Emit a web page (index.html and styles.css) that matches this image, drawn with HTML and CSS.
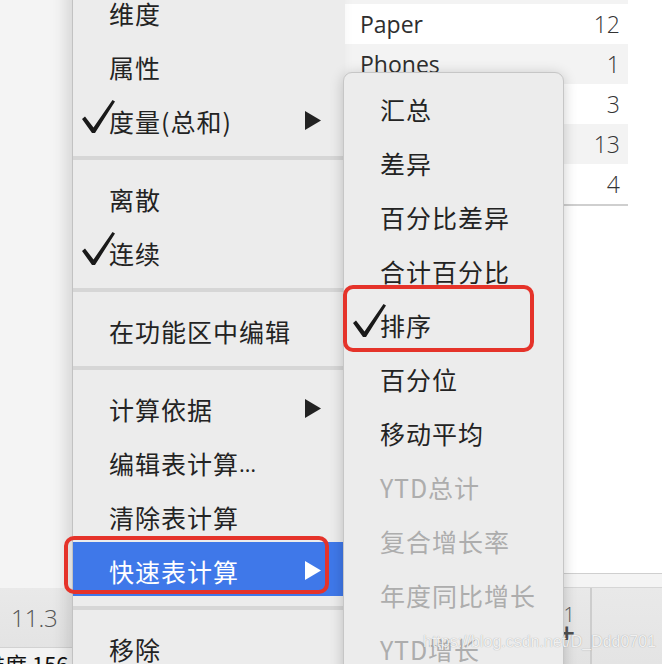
FILE: index.html
```html
<!DOCTYPE html>
<html lang="zh-CN">
<head>
    <meta charset="UTF-8">
    <meta name="viewport" content="width=device-width, initial-scale=1.0">
    <title>快速表计算</title>
    <link rel="stylesheet" href="styles.css">
</head>
<body>
    <div class="screen">
        <div class="workspace">
            <div class="side"></div>
            <div class="view">
                <div class="table">
                    <div class="row alt"><span>Machines</span><span class="num">9</span></div>
                    <div class="row"><span>Paper</span><span class="num">12</span></div>
                    <div class="row alt"><span>Phones</span><span class="num">1</span></div>
                    <div class="row"><span>Storage</span><span class="num">3</span></div>
                    <div class="row alt"><span>Supplies</span><span class="num">13</span></div>
                    <div class="row last"><span>Tables</span><span class="num">4</span></div>
                </div>
                <div class="fill"></div>
                <div class="hscroll"></div>
            </div>
        </div>
        <div class="shelf">
            <div class="shelf-left">
                <div class="cell">11.3</div>
                <div class="status">维度 156</div>
            </div>
            <div class="shelf-mid">
                <span class="count">11</span>
                <span class="plus">+</span>
            </div>
            <div class="shelf-right"></div>
        </div>
    </div>

    <!-- context menu -->
    <div class="menu main-menu">
        <div class="item"><span class="mark"></span>维度</div>
        <div class="item"><span class="mark"></span>属性</div>
        <div class="item"><span class="mark"><svg viewBox="0 0 33 33"><path d="M0 19 L3 16.5 L11.5 27.5 L30.5 0 L33 1.5 L13 33 L10 33 Z"/></svg></span>度量(总和)<span class="arrow"><svg viewBox="0 0 16 19"><path d="M0 0 L16 9.5 L0 19 Z"/></svg></span></div>
        <div class="sep"></div>
        <div class="item"><span class="mark"></span>离散</div>
        <div class="item"><span class="mark"><svg viewBox="0 0 33 33"><path d="M0 19 L3 16.5 L11.5 27.5 L30.5 0 L33 1.5 L13 33 L10 33 Z"/></svg></span>连续</div>
        <div class="sep"></div>
        <div class="item"><span class="mark"></span>在功能区中编辑</div>
        <div class="sep"></div>
        <div class="item"><span class="mark"></span>计算依据<span class="arrow"><svg viewBox="0 0 16 19"><path d="M0 0 L16 9.5 L0 19 Z"/></svg></span></div>
        <div class="item"><span class="mark"></span>编辑表计算<span class="ell">…</span></div>
        <div class="item"><span class="mark"></span>清除表计算</div>
        <div class="item active"><span class="mark"></span>快速表计算<span class="arrow"><svg viewBox="0 0 16 19"><path d="M0 0 L16 9.5 L0 19 Z"/></svg></span></div>
        <div class="sep"></div>
        <div class="item"><span class="mark"></span>移除</div>
    </div>

    <div class="menu sub-menu">
        <div class="item"><span class="mark"></span>汇总</div>
        <div class="item"><span class="mark"></span>差异</div>
        <div class="item"><span class="mark"></span>百分比差异</div>
        <div class="item"><span class="mark"></span>合计百分比</div>
        <div class="item"><span class="mark"><svg viewBox="0 0 33 33"><path d="M0 19 L3 16.5 L11.5 27.5 L30.5 0 L33 1.5 L13 33 L10 33 Z"/></svg></span>排序</div>
        <div class="item"><span class="mark"></span>百分位</div>
        <div class="item"><span class="mark"></span>移动平均</div>
        <div class="item off"><span class="mark"></span>YTD总计</div>
        <div class="item off"><span class="mark"></span>复合增长率</div>
        <div class="item off"><span class="mark"></span>年度同比增长</div>
        <div class="item off"><span class="mark"></span>YTD增长</div>
    </div>

    <!-- annotations -->
    <div class="callout callout-rank"></div>
    <div class="callout callout-quick"></div>
    <div class="watermark">https://blog.csdn.net/D_Ddd0701</div>
</body>
</html>
```

FILE: styles.css
```css
html, body {
    margin: 0;
    padding: 0;
}
body {
    width: 662px;
    height: 664px;
    overflow: hidden;
    position: relative;
    font-family: "Noto Sans CJK SC", sans-serif;
    color: #232323;
    background: #fff;
}
.screen {
    display: flex;
    flex-direction: column;
    height: 664px;
    overflow: hidden;
}
.workspace {
    display: flex;
    height: 588px;
    flex-shrink: 0;
}
.side {
    width: 344px;
    background: #f4f4f4;
}
.view {
    flex: 1;
    display: flex;
    flex-direction: column;
    background: #fff;
}
.table {
    width: 284px;
    margin-top: -36px;
    font-family: "Open Sans", sans-serif;
    font-size: 23px;
    color: #2e2e2e;
}
.row {
    height: 40px;
    display: flex;
    align-items: center;
    justify-content: space-between;
    padding: 0 8px 0 16px;
    background: #fff;
}
.row.alt {
    background: #f3f3f3;
}
.row.last {
    border-bottom: 2px solid #cfcfcf;
}
.num {
    font-weight: 300;
    color: #333;
}
.fill {
    flex: 1;
}
.hscroll {
    height: 13px;
    border-top: 1px solid #cfcfcf;
    border-bottom: 1px solid #d6d6d6;
    background: #f4f4f4;
}
.shelf {
    flex: 1;
    min-height: 0;
    display: flex;
    overflow: hidden;
    background: linear-gradient(#e9e9e9, #e2e2e2);
}
.shelf-left {
    width: 344px;
    flex-shrink: 0;
    display: flex;
    flex-direction: column;
}
.cell {
    height: 59px;
    flex-shrink: 0;
    border-bottom: 1px solid #d2d2d2;
    padding-left: 11px;
    display: flex;
    align-items: center;
    font-family: "Open Sans", sans-serif;
    font-weight: 300;
    font-size: 24px;
    color: #555;
}
.status {
    background: #f3f3f3;
    font-size: 22px;
    line-height: 30px;
    margin-left: -17px;
    color: #111;
    white-space: nowrap;
}
.shelf-mid {
    width: 248px;
    flex-shrink: 0;
    border-right: 2px solid #cdcdcd;
    display: flex;
    flex-direction: column;
    align-items: flex-end;
    padding: 18px 15px 0 0;
    box-sizing: border-box;
    color: #555;
}
.count {
    font-family: "Open Sans", sans-serif;
    font-size: 20px;
    line-height: 18px;
    font-weight: 300;
}
.plus {
    font-family: "DejaVu Sans", sans-serif;
    font-weight: bold;
    font-size: 22px;
    line-height: 18px;
    color: #505050;
    margin-right: -1px;
}
.shelf-right {
    flex: 1;
    background: linear-gradient(#e9e9e9, #e4e4e4);
}

/* menus */
.menu {
    position: absolute;
    background: #ececec;
    font-size: 25px;
    letter-spacing: 1px;
}
.main-menu {
    left: 72px;
    top: -16px;
    width: 272px;
    border-left: 1px solid #c2c2c2;
    box-shadow: -6px 0 14px rgba(0, 0, 0, 0.12);
}
.sub-menu {
    left: 343px;
    top: 72px;
    width: 219px;
    height: 640px;
    padding-top: 7px;
    border: 1px solid #c6c6c6;
    border-radius: 9px 9px 0 0;
    box-shadow: 0 2px 14px rgba(0, 0, 0, 0.2);
}
.item {
    height: 54px;
    box-sizing: border-box;
    padding: 4px 24px 0 8px;
    display: flex;
    align-items: center;
    white-space: nowrap;
}
.mark {
    width: 28px;
    flex-shrink: 0;
}
.mark svg {
    display: block;
    width: 33px;
    height: 33px;
    margin: -9px 0 0 1px;
    fill: #1a1a1a;
}
.ell {
    font-family: "Open Sans", sans-serif;
    letter-spacing: 0;
    font-size: 22px;
}
.arrow {
    margin-left: auto;
    display: flex;
}
.arrow svg {
    width: 16px;
    height: 19px;
    margin-top: -1px;
    fill: #222;
}
.item.active {
    background: #3f78e9;
    color: #fff;
}
.item.active .arrow svg {
    fill: #fff;
}
.item.off {
    color: #adadad;
}
.sep {
    height: 4px;
    margin: 10px 0;
    background: #d6d6d6;
}

/* red annotation boxes */
.callout {
    position: absolute;
    border: 4px solid #e5332a;
    border-radius: 10px;
    box-sizing: border-box;
}
.callout-rank {
    left: 343px;
    top: 285px;
    width: 191px;
    height: 67px;
}
.callout-quick {
    left: 64px;
    top: 536px;
    width: 265px;
    height: 58px;
}
.watermark {
    position: absolute;
    left: 423px;
    top: 633px;
    font-family: "Liberation Sans", sans-serif;
    font-size: 16px;
    color: rgba(255, 255, 255, 0.85);
    text-shadow: 0 0 1px rgba(0, 0, 0, 0.35);
    white-space: nowrap;
}
```
